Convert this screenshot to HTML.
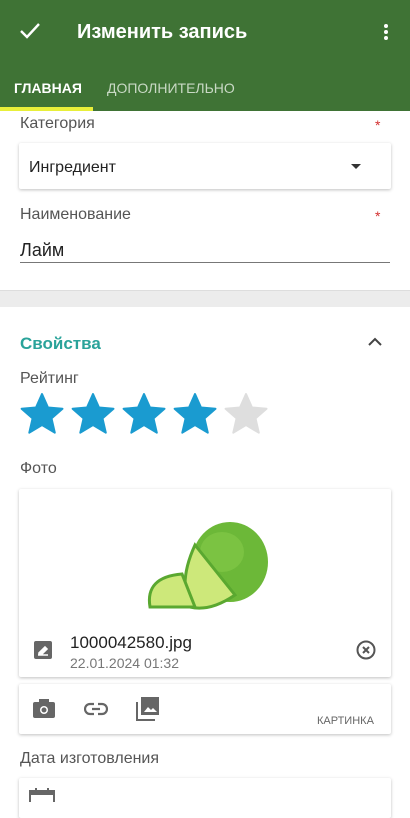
<!DOCTYPE html>
<html><head><meta charset="utf-8"><style>
*{margin:0;padding:0;box-sizing:border-box}
body{width:410px;height:800px;overflow:hidden;background:#fff;font-family:"Liberation Sans",sans-serif;position:relative;color:#222}
.abs{position:absolute}
.bar{left:0;top:0;width:410px;height:111px;background:#3f7335;color:#fff}
.card{background:#fff;box-shadow:0 1px 3px rgba(0,0,0,.25);border-radius:2px}
.lbl{font-size:16px;color:#555}
.req{color:#d32f2f;font-size:14px}
</style></head><body>
<div class="abs bar">
 <svg class="abs" style="left:19px;top:22px" width="22" height="18" viewBox="0 0 22 18"><path d="M2 9l6 6L20 2" stroke="#fff" stroke-width="2.4" fill="none"/></svg>
 <div class="abs" style="left:77px;top:21px;font-size:20px;font-weight:bold">Изменить запись</div>
 <div class="abs" style="left:384px;top:24px;width:4px;height:4px;border-radius:2px;background:#fff;box-shadow:0 6px 0 #fff,0 12px 0 #fff"></div>
 <div class="abs" style="left:14px;top:80px;font-size:14px;font-weight:bold">ГЛАВНАЯ</div>
 <div class="abs" style="left:107px;top:80px;font-size:14px;color:#c9d9c5">ДОПОЛНИТЕЛЬНО</div>
 <div class="abs" style="left:0;top:107px;width:93px;height:4px;background:#e8ef3a"></div>
</div>
<div class="abs lbl" style="left:20px;top:115px">Категория</div>
<div class="abs req" style="left:375px;top:117px">*</div>
<div class="abs card" style="left:19px;top:143px;width:372px;height:46px"></div>
<div class="abs" style="left:29px;top:159px;font-size:16px">Ингредиент</div>
<div class="abs" style="left:351px;top:164px;width:0;height:0;border-left:5px solid transparent;border-right:5px solid transparent;border-top:5px solid #333"></div>
<div class="abs lbl" style="left:20px;top:206px">Наименование</div>
<div class="abs req" style="left:375px;top:208px">*</div>
<div class="abs" style="left:20px;top:240px;font-size:18px">Лайм</div>
<div class="abs" style="left:20px;top:262px;width:370px;height:1px;background:#777"></div>
<div class="abs" style="left:0;top:290px;width:410px;height:17px;background:#ececec;border-top:1px solid #ddd"></div>
<div class="abs" style="left:20px;top:334px;font-size:17px;font-weight:bold;color:#2aa39a">Свойства</div>
<svg class="abs" style="left:368px;top:337px" width="14" height="10"><path d="M1 8l6-6 6 6" stroke="#444" stroke-width="2" fill="none"/></svg>
<div class="abs lbl" style="left:20px;top:370px">Рейтинг</div>
<svg class="abs" style="left:20px;top:392px" width="250" height="44" viewBox="0 0 250 44">
 <defs><path id="s" d="M22 2l6 13.5 14.5 1.3-11 9.6 3.3 14.3L22 33l-12.7 7.7 3.3-14.3-11-9.6L16 15.5z" stroke-linejoin="round" stroke-width="2"/></defs>
 <use href="#s" fill="#1a9bd0" stroke="#1a9bd0"/><use href="#s" x="51" fill="#1a9bd0" stroke="#1a9bd0"/><use href="#s" x="102" fill="#1a9bd0" stroke="#1a9bd0"/><use href="#s" x="153" fill="#1a9bd0" stroke="#1a9bd0"/><use href="#s" x="204" fill="#dedede" stroke="#dedede"/>
</svg>
<div class="abs lbl" style="left:20px;top:460px">Фото</div>
<div class="abs card" style="left:19px;top:489px;width:372px;height:188px"></div>
<svg class="abs" style="left:140px;top:512px" width="130" height="100" viewBox="0 0 130 100">
 <ellipse cx="90" cy="50" rx="38" ry="40" fill="#6cb838"/>
 <ellipse cx="82" cy="40" rx="22" ry="20" fill="#86c94a" opacity=".6"/>
 <path d="M55 33 L95 83 Q70 100 50 95 Q38 70 55 33z" fill="#cde87a" stroke="#5aa830" stroke-width="3"/>
 <path d="M10 95 Q5 65 42 62 L55 95z" fill="#cde87a" stroke="#5aa830" stroke-width="3"/>
</svg>
<svg class="abs" style="left:34px;top:641px" width="18" height="18"><rect width="18" height="18" rx="2" fill="#666"/><path d="M4 14h10M5 12l6-6 2 2-6 6H5z" stroke="#fff" stroke-width="1.6" fill="#fff"/></svg>
<div class="abs" style="left:70px;top:633px;font-size:17px">1000042580.jpg</div>
<div class="abs" style="left:70px;top:655px;font-size:14px;color:#777">22.01.2024 01:32</div>
<svg class="abs" style="left:356px;top:640px" width="20" height="20"><circle cx="10" cy="10" r="8.5" stroke="#555" stroke-width="2" fill="none"/><path d="M7 7l6 6M13 7l-6 6" stroke="#555" stroke-width="2"/></svg>
<div class="abs card" style="left:19px;top:684px;width:372px;height:50px"></div>
<svg class="abs" style="left:33px;top:699px" width="22" height="20"><rect x="0" y="3" width="22" height="16" rx="2" fill="#666"/><rect x="6" y="0" width="10" height="4" fill="#666"/><circle cx="11" cy="11" r="4" fill="#fff"/><circle cx="11" cy="11" r="2.5" fill="#666"/></svg>
<svg class="abs" style="left:84px;top:702px" width="24" height="14"><path d="M10 2H6a5 5 0 000 10h4M14 2h4a5 5 0 010 10h-4M8 7h8" stroke="#666" stroke-width="2.2" fill="none"/></svg>
<svg class="abs" style="left:136px;top:697px" width="24" height="24"><path d="M1 5v18h18" stroke="#666" stroke-width="2" fill="none"/><rect x="5" y="0" width="18" height="18" fill="#666"/><path d="M8 15l4-5 3 3 2-2 4 4z" fill="#fff"/></svg>
<div class="abs" style="left:317px;top:715px;font-size:11px;color:#666">КАРТИНКА</div>
<div class="abs lbl" style="left:20px;top:750px">Дата изготовления</div>
<div class="abs card" style="left:19px;top:778px;width:372px;height:40px"></div>
<svg class="abs" style="left:29px;top:788px" width="26" height="14"><rect x="1" y="3" width="24" height="14" fill="none" stroke="#666" stroke-width="2"/><rect x="1" y="3" width="24" height="4" fill="#666"/><rect x="6" y="0" width="2" height="4" fill="#666"/><rect x="18" y="0" width="2" height="4" fill="#666"/></svg>
</body></html>
